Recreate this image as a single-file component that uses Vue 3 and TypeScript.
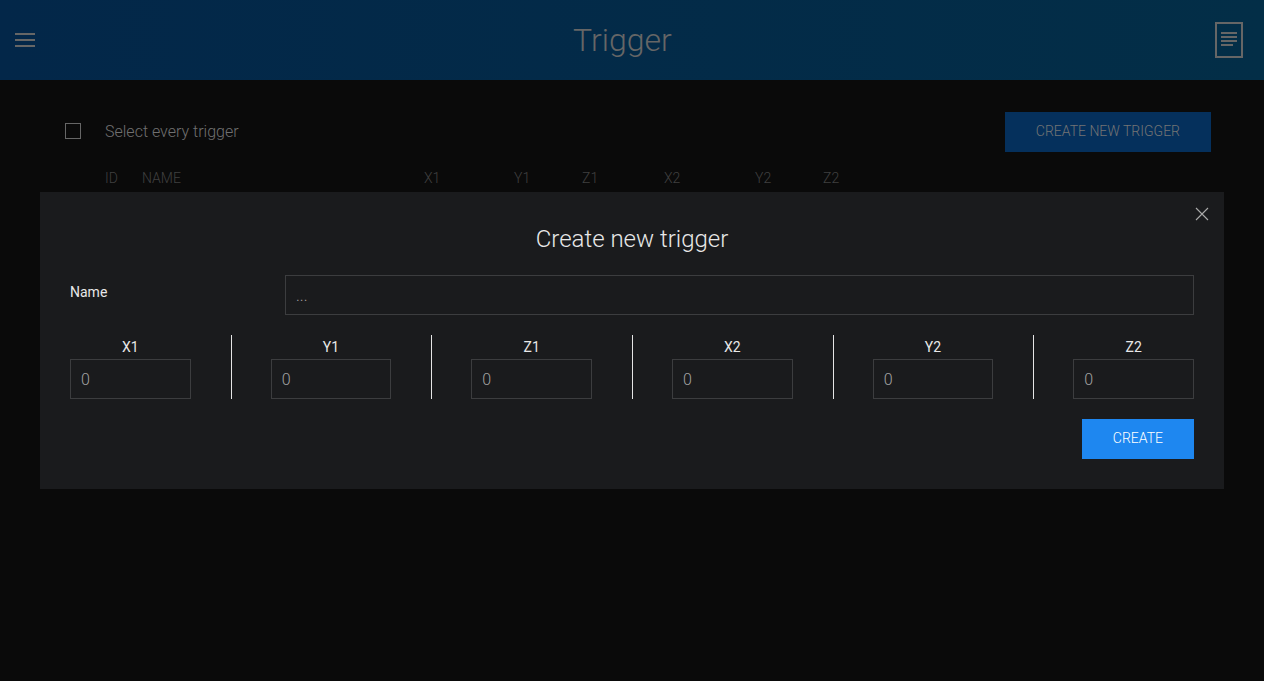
<script setup lang="ts">
import { ref } from 'vue'

const axes: string[] = ['X1', 'Y1', 'Z1', 'X2', 'Y2', 'Z2']
const columns: string[] = ['ID', 'NAME', ...axes]
const allSelected = ref(false)
const modalOpen = ref(true)
const name = ref('')
</script>

<template>
  <div class="page">
    <header class="navbar">
      <svg class="menu" width="20" height="14" viewBox="0 0 20 14">
        <path d="M0 1H20M0 7H20M0 13H20" fill="none" stroke="currentColor" stroke-width="2" />
      </svg>
      <h1>Trigger</h1>
      <svg class="doc" width="28" height="36" viewBox="0 0 28 36">
        <rect x="1" y="1" width="26" height="34" fill="none" stroke="currentColor" stroke-width="2" />
        <path d="M6 11H22M6 15H22M6 19H22M6 23H18" fill="none" stroke="currentColor" stroke-width="2" />
      </svg>
    </header>

    <main>
      <div class="toolbar">
        <label class="select-all">
          <input v-model="allSelected" type="checkbox" />
          <span>Select every trigger</span>
        </label>
        <button class="button muted" type="button" @click="modalOpen = true">CREATE NEW TRIGGER</button>
      </div>
      <div class="table-head">
        <span v-for="c in columns" :key="c">{{ c }}</span>
      </div>
    </main>

    <div v-if="modalOpen" class="modal">
      <section class="dialog">
        <button class="close" type="button" aria-label="Close" @click="modalOpen = false">
          <svg width="14" height="14" viewBox="0 0 14 14">
            <path d="M1 1L13 13M13 1L1 13" fill="none" stroke="currentColor" stroke-width="1.1" />
          </svg>
        </button>
        <h2>Create new trigger</h2>
        <div class="name-row">
          <label for="name">Name</label>
          <input id="name" v-model="name" class="field" type="text" placeholder="..." />
        </div>
        <div class="axes">
          <div v-for="a in axes" :key="a" class="axis">
            <label :for="a">{{ a }}</label>
            <input :id="a" class="field" type="text" placeholder="0" />
          </div>
        </div>
        <div class="actions">
          <button class="button primary" type="button">CREATE</button>
        </div>
      </section>
    </div>
  </div>
</template>

<style>
body {
  background: #0a0a0a;
}
</style>

<style scoped>
.page,
.page * {
  box-sizing: border-box;
}
.page {
  position: relative;
  height: 681px;
  overflow: hidden;
  background: #0a0a0a;
  font-family: Roboto, 'Liberation Sans', sans-serif;
  font-size: 16px;
  font-weight: 300;
  line-height: 1.5;
}
.navbar {
  display: grid;
  grid-template-columns: 35px 1fr 28px;
  align-items: center;
  height: 80px;
  padding: 0 21px 0 15px;
  color: #666;
  background: linear-gradient(90deg, #032749, #032e47);
}
.navbar svg {
  display: block;
}
h1,
h2 {
  margin: 0;
  font-weight: 300;
  text-align: center;
}
h1 {
  font-size: 32px;
  line-height: 80px;
  padding-right: 20px;
}
main {
  padding: 32px 53px 0 65px;
}
.toolbar {
  display: flex;
  justify-content: space-between;
  height: 40px;
}
.select-all {
  display: flex;
  align-items: center;
  gap: 24px;
  height: 38px;
  color: #707070;
}
.select-all span {
  padding-top: 2px;
}
.select-all input {
  appearance: none;
  width: 16px;
  height: 16px;
  margin: 0;
  border: 1px solid #666;
}
.button {
  height: 40px;
  margin: 0;
  padding: 0 31px 2px;
  border: 0;
  font: 300 14px/38px Roboto, 'Liberation Sans', sans-serif;
}
.muted {
  background: #05305c;
  color: #747474;
}
.primary {
  background: #1e87f0;
  color: #fff;
}
.table-head {
  display: grid;
  grid-template-columns: 37px 282px 90px 68px 82px 91px 68px 60px;
  padding: 16px 0 0 40px;
  font-size: 14px;
  color: #404040;
}
.modal {
  position: absolute;
  inset: 192px 40px auto;
}
.dialog {
  position: relative;
  height: 297px;
  padding: 30px;
  background: #1a1b1d;
  color: #e8e8e8;
}
.close {
  position: absolute;
  top: 15px;
  right: 15px;
  padding: 0;
  border: 0;
  background: none;
  color: #aaa;
}
.close svg {
  display: block;
}
h2 {
  height: 53px;
  font-size: 24px;
  line-height: 35px;
  color: #e8e8e8;
}
.name-row {
  display: grid;
  grid-template-columns: 215px 1fr;
}
.name-row label {
  padding-top: 7px;
}
label {
  font-weight: 400;
}
.select-all {
  font-weight: 300;
}
.dialog label {
  font-size: 14px;
  line-height: 21px;
}
.field {
  display: block;
  width: 100%;
  height: 40px;
  margin: 0;
  padding: 0 10px;
  border: 1px solid #3c3d3f;
  border-radius: 0;
  outline: 0;
  background: transparent;
  color: #999;
  font: 300 16px Roboto, 'Liberation Sans', sans-serif;
}
.field::placeholder {
  color: #a2a2a2;
  opacity: 1;
}
.axes {
  display: grid;
  grid-template-columns: repeat(6, 1fr);
  gap: 80px;
  margin-top: 20px;
}
.axis {
  position: relative;
  height: 64px;
  text-align: center;
}
.axis label {
  display: block;
  height: 24px;
  line-height: 24px;
}
.axis + .axis::before {
  content: '';
  position: absolute;
  top: 0;
  bottom: 0;
  left: -40px;
  border-left: 1px solid #e5e5e5;
}
.actions {
  display: flex;
  justify-content: flex-end;
  margin-top: 20px;
}
</style>
